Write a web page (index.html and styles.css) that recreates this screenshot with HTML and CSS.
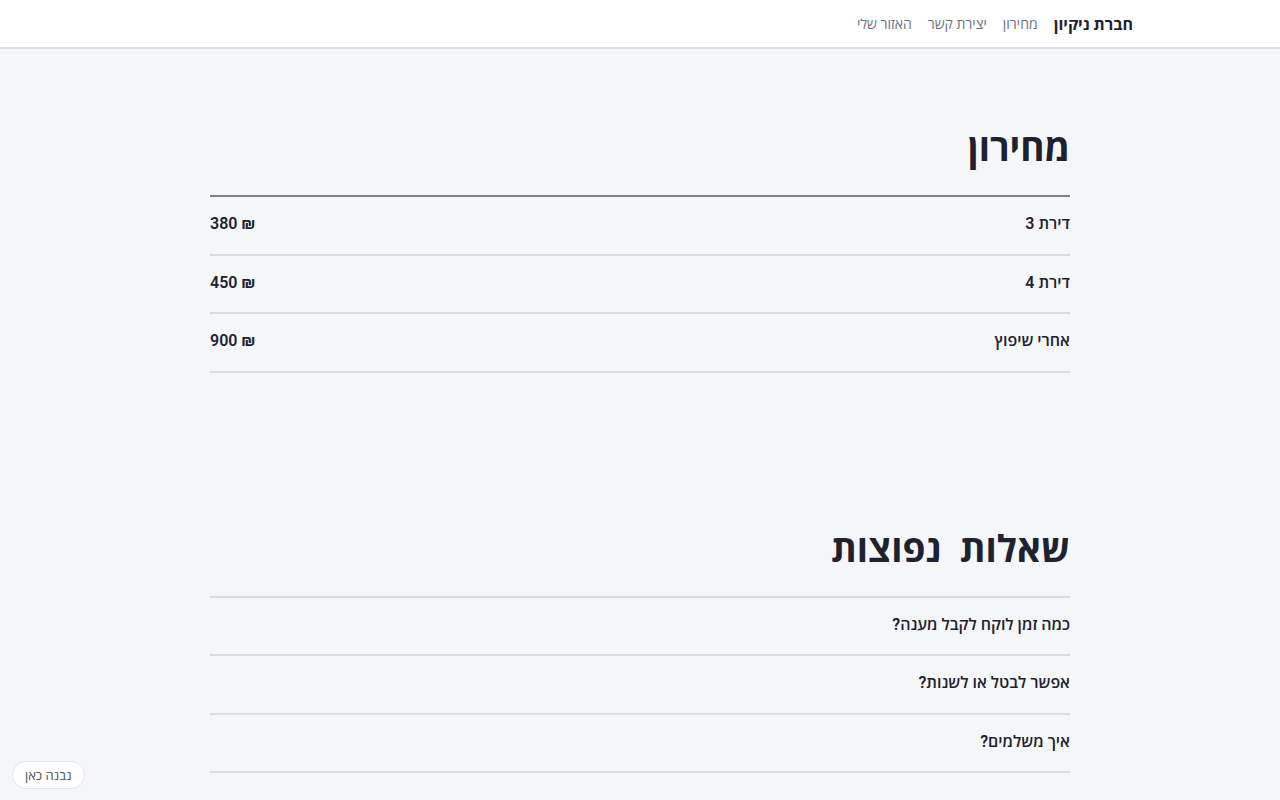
FILE: index.html
```html
<!DOCTYPE html>
<html lang="he" dir="rtl">
  <head>
    <meta charset="UTF-8" />
    <meta name="viewport" content="width=device-width, initial-scale=1.0" />
    <title>חברת ניקיון</title>
    <link rel="stylesheet" href="styles.css">
  </head>
  <body>
    <header class="topbar">
      <nav class="nav">
        <a class="brand" href="#">חברת ניקיון</a>
        <a href="#prices">מחירון</a>
        <a href="#contact">יצירת קשר</a>
        <a href="#account">האזור שלי</a>
      </nav>
    </header>

    <main>
      <section class="block" id="prices">
        <h2>מחירון</h2>
        <ul class="table table-strong">
          <li class="row"><span>דירת 3</span><span class="price">380 ₪</span></li>
          <li class="row"><span>דירת 4</span><span class="price">450 ₪</span></li>
          <li class="row"><span>אחרי שיפוץ</span><span class="price">900 ₪</span></li>
        </ul>
      </section>

      <section class="block" id="faq">
        <h2>שאלות&nbsp; נפוצות</h2>
        <ul class="table">
          <li class="row"><span>כמה זמן לוקח לקבל מענה?</span></li>
          <li class="row"><span>אפשר לבטל או לשנות?</span></li>
          <li class="row"><span>איך משלמים?</span></li>
        </ul>
      </section>
    </main>

    <a class="made-here" href="#">נבנה כאן</a>
  </body>
</html>
```

FILE: styles.css
```css
body {
  margin: 0;
  background: #f5f6f8;
  color: #1c2230;
  font-family: Roboto, "Open Sans", "Liberation Sans", sans-serif;
}
a {
  text-decoration: none;
  color: inherit;
}
.topbar {
  background: #fff;
  border-bottom: 2px solid #dcdde0;
  height: 47px;
}
.nav {
  display: flex;
  align-items: center;
  gap: 16px;
  height: 47px;
  padding-right: 147px;
  font-size: 14px;
  color: #6b7280;
}
.nav .brand {
  font-size: 16px;
  font-weight: 700;
  color: #1c2230;
}
main {
  max-width: 860px;
  margin: 0 auto;
  padding-top: 80px;
}
.block {
  margin-bottom: 157px;
}
.block h2 {
  margin: 0 0 26px;
  font-size: 37px;
  font-weight: 700;
  line-height: 40px;
}
.table {
  list-style: none;
  margin: 0;
  padding: 0;
  border-top: 2px solid #d9dbdf;
}
.table-strong {
  border-top-color: #7c7f88;
}
.row {
  display: flex;
  justify-content: space-between;
  align-items: center;
  padding: 15px 0 17px;
  line-height: 24.5px;
  border-bottom: 2px solid #d9dbdf;
  font-size: 16px;
  font-weight: 600;
}
.price {
  direction: ltr;
}
.made-here {
  position: fixed;
  left: 12px;
  bottom: 11px;
  padding: 4px 12px;
  background: #fff;
  border: 1px solid #e2e4e8;
  border-radius: 14px;
  font-size: 13px;
  color: #4b5060;
}
```
